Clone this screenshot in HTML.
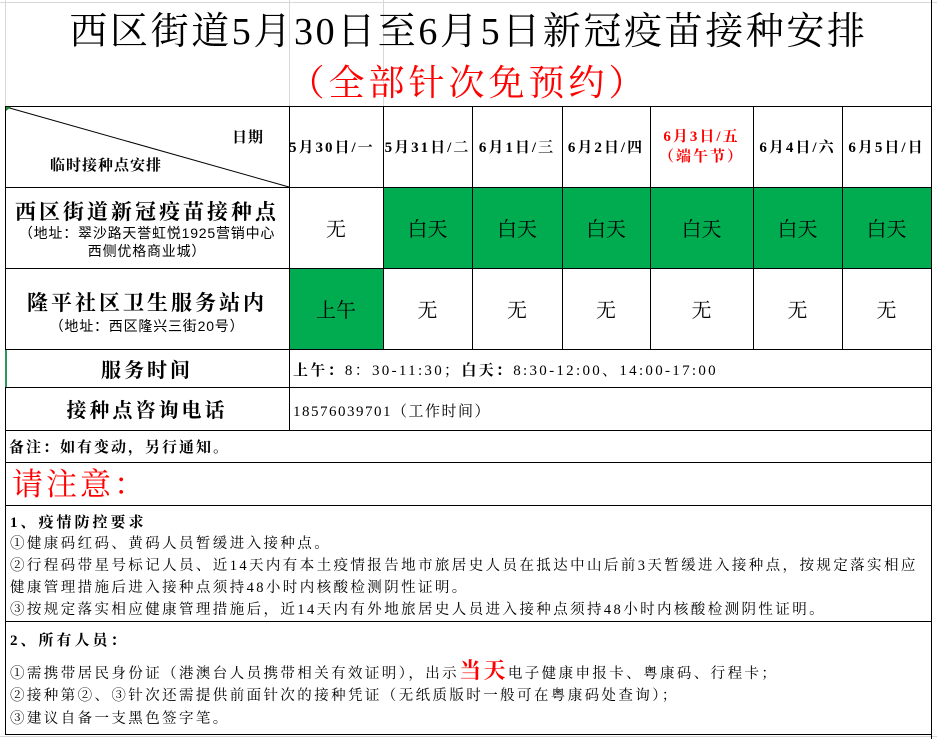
<!DOCTYPE html>
<html><head><meta charset="utf-8"><style>
body{margin:0;width:937px;height:739px;background:#fff;position:relative;overflow:hidden;font-family:"Liberation Serif","Noto Serif CJK SC",serif;color:#000}
.a{position:absolute;white-space:nowrap}
.h{position:absolute;background:#000;height:1px}
.v{position:absolute;background:#000;width:1px}
.g{position:absolute;background:#00ac4f}
.c{position:absolute;display:flex;align-items:center;justify-content:center;text-align:center;font-size:20px}
.d{font-size:15px;font-weight:bold;letter-spacing:1px}
.n{font-size:14.5px;left:10px;letter-spacing:2.4px}
</style></head><body>
<div class="h" style="left:0;top:2px;width:937px;background:#d8d8d8"></div>
<div class="v" style="left:5px;top:0;height:106px;background:#d8d8d8"></div>
<div class="v" style="left:289px;top:0;height:106px;background:#d8d8d8"></div>
<div class="v" style="left:383px;top:0;height:106px;background:#d8d8d8"></div>
<div class="h" style="left:0;top:736px;width:937px;background:#d8d8d8"></div>
<div class="a" style="left:0;width:937px;text-align:center;top:9px;font-size:38px;line-height:46px;letter-spacing:2.6px">西区街道5月30日至6月5日新冠疫苗接种安排</div>
<div class="a" style="left:0;width:937px;text-align:center;top:62px;font-size:36px;line-height:42px;color:#f00;letter-spacing:4px">（全部针次免预约）</div>

<div class="g" style="left:383px;top:187px;width:548px;height:81px"></div>
<div class="g" style="left:289px;top:268px;width:94px;height:81px"></div>

<div class="h" style="left:5px;top:106px;width:927px"></div>
<div class="h" style="left:5px;top:187px;width:927px"></div>
<div class="h" style="left:5px;top:268px;width:927px"></div>
<div class="h" style="left:5px;top:349px;width:927px"></div>
<div class="h" style="left:5px;top:387px;width:927px"></div>
<div class="h" style="left:5px;top:430px;width:927px"></div>
<div class="h" style="left:5px;top:462px;width:927px"></div>
<div class="h" style="left:5px;top:505px;width:927px"></div>
<div class="h" style="left:5px;top:621px;width:927px"></div>
<div class="h" style="left:5px;top:734px;width:927px"></div>
<div class="v" style="left:5px;top:106px;height:629px"></div>
<div class="v" style="left:931px;top:0;height:739px"></div>
<div class="v" style="left:289px;top:106px;height:324px"></div>
<div class="v" style="left:383px;top:106px;height:243px"></div>
<div class="v" style="left:472px;top:106px;height:243px"></div>
<div class="v" style="left:562px;top:106px;height:243px"></div>
<div class="v" style="left:650px;top:106px;height:243px"></div>
<div class="v" style="left:753px;top:106px;height:243px"></div>
<div class="v" style="left:842px;top:106px;height:243px"></div>
<div class="v" style="left:5px;top:350px;height:37px;width:2px;background:#2a9a5a"></div>
<svg class="a" style="left:0;top:0" width="937" height="739"><line x1="6" y1="107" x2="289" y2="187" stroke="#000" stroke-width="1"/><path d="M6 107 L11 107 L6 111Z" fill="#1a8a2a"/></svg>

<div class="a d" style="left:232px;top:126px">日期</div>
<div class="a d" style="left:50px;top:154px">临时接种点安排</div>
<div class="c d" style="left:289px;top:106px;width:100px;height:81px;justify-content:flex-start;letter-spacing:2px">5月30日/一</div>
<div class="c d" style="left:380px;top:106px;width:95px;height:81px;letter-spacing:2px">5月31日/二</div>
<div class="c d" style="left:472px;top:106px;width:90px;height:81px;letter-spacing:2px">6月1日/三</div>
<div class="c d" style="left:562px;top:106px;width:88px;height:81px;letter-spacing:2px">6月2日/四</div>
<div class="c d" style="left:650px;top:106px;width:103px;height:81px;color:#f00;line-height:20px;letter-spacing:2px">6月3日/五<br>（端午节）</div>
<div class="c d" style="left:753px;top:106px;width:89px;height:81px;letter-spacing:2px">6月4日/六</div>
<div class="c d" style="left:842px;top:106px;width:89px;height:81px;letter-spacing:2px">6月5日/日</div>

<div class="a" style="left:5px;width:284px;text-align:center;top:196px;font-size:21px;font-weight:bold;letter-spacing:3px">西区街道新冠疫苗接种点</div>
<div class="a" style="left:5px;width:284px;text-align:center;top:224px;font-size:14px;line-height:18px;letter-spacing:0.8px;font-family:'Liberation Sans','Noto Sans CJK SC',sans-serif">（地址：翠沙路天誉虹悦1925营销中心<br>西侧优格商业城）</div>
<div class="a" style="left:5px;width:284px;text-align:center;top:287px;font-size:21px;font-weight:bold;letter-spacing:3px">隆平社区卫生服务站内</div>
<div class="a" style="left:5px;width:284px;text-align:center;top:316px;font-size:14px;letter-spacing:0.8px;font-family:'Liberation Sans','Noto Sans CJK SC',sans-serif">（地址：西区隆兴三街20号）</div>

<div class="c" style="left:289px;top:187px;width:94px;height:81px">无</div>
<div class="c" style="left:383px;top:187px;width:89px;height:81px">白天</div>
<div class="c" style="left:472px;top:187px;width:90px;height:81px">白天</div>
<div class="c" style="left:562px;top:187px;width:88px;height:81px">白天</div>
<div class="c" style="left:650px;top:187px;width:103px;height:81px">白天</div>
<div class="c" style="left:753px;top:187px;width:89px;height:81px">白天</div>
<div class="c" style="left:842px;top:187px;width:89px;height:81px">白天</div>
<div class="c" style="left:289px;top:268px;width:94px;height:81px">上午</div>
<div class="c" style="left:383px;top:268px;width:89px;height:81px">无</div>
<div class="c" style="left:472px;top:268px;width:90px;height:81px">无</div>
<div class="c" style="left:562px;top:268px;width:88px;height:81px">无</div>
<div class="c" style="left:650px;top:268px;width:103px;height:81px">无</div>
<div class="c" style="left:753px;top:268px;width:89px;height:81px">无</div>
<div class="c" style="left:842px;top:268px;width:89px;height:81px">无</div>

<div class="c" style="left:5px;top:349px;width:284px;height:38px;font-weight:bold;letter-spacing:3px">服务时间</div>
<div class="c" style="left:5px;top:387px;width:284px;height:43px;font-weight:bold;letter-spacing:3px">接种点咨询电话</div>
<div class="a" style="left:293px;top:359px;font-size:15px;letter-spacing:2.3px"><b>上午：</b>8：30-11:30；<b>白天：</b>8:30-12:00、14:00-17:00</div>
<div class="a" style="left:293px;top:400px;font-size:15px;letter-spacing:1.5px">18576039701（工作时间）</div>
<div class="a" style="left:9px;top:436px;font-size:15px;font-weight:bold;letter-spacing:2px">备注：如有变动，另行通知。</div>
<div class="a" style="left:12px;top:466px;font-size:31px;color:#f00;line-height:38px;letter-spacing:3px">请注意：</div>

<div class="a n" style="top:511px;font-weight:bold;font-size:15px;letter-spacing:3px">1、疫情防控要求</div>
<div class="a n" style="top:532px">①健康码红码、黄码人员暂缓进入接种点。</div>
<div class="a n" style="top:554px">②行程码带星号标记人员、近14天内有本土疫情报告地市旅居史人员在抵达中山后前3天暂缓进入接种点，按规定落实相应</div>
<div class="a n" style="top:576px">健康管理措施后进入接种点须持48小时内核酸检测阴性证明。</div>
<div class="a n" style="top:598px">③按规定落实相应健康管理措施后，近14天内有外地旅居史人员进入接种点须持48小时内核酸检测阴性证明。</div>
<div class="a n" style="top:629px;font-weight:bold;font-size:15px;letter-spacing:3px">2、所有人员：</div>
<div class="a n" style="top:656px;line-height:30px">①需携带居民身份证（港澳台人员携带相关有效证明），出示<span style="color:#f00;font-size:22px;font-weight:bold">当天</span>电子健康申报卡、粤康码、行程卡；</div>
<div class="a n" style="top:684px">②接种第②、③针次还需提供前面针次的接种凭证（无纸质版时一般可在粤康码处查询）；</div>
<div class="a n" style="top:707px">③建议自备一支黑色签字笔。</div>
</body></html>
